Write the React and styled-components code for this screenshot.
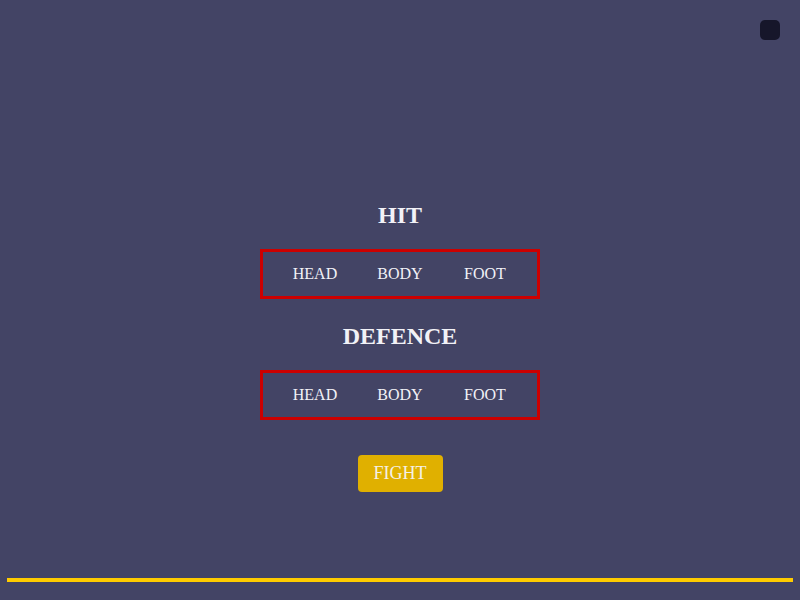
import React from "react";
import styled, { createGlobalStyle } from "styled-components";

const Global = createGlobalStyle`
  html, body { margin: 0; padding: 0; }
  body {
    background: #434465;
    font-family: "Liberation Serif", "Times New Roman", serif;
    color: #f2f2f7;
  }
`;

const Page = styled.div`
  position: relative;
  height: 600px;
  display: flex;
  flex-direction: column;
  align-items: center;
  padding-top: 201px;
  box-sizing: border-box;
`;

const Corner = styled.div`
  position: absolute;
  top: 20px;
  right: 20px;
  width: 20px;
  height: 20px;
  border-radius: 5px;
  background: #16162a;
`;

const Title = styled.h2`
  margin: 0;
  font-size: 24px;
  line-height: 28px;
  font-weight: bold;
  text-align: center;
  margin-top: ${(p) => p.$top || 0}px;
`;

const Options = styled.div`
  margin-top: 20px;
  width: 280px;
  height: 50px;
  box-sizing: border-box;
  border: 3px solid #cc0000;
  display: flex;
  justify-content: center;
  align-items: center;
`;

const Option = styled.div`
  width: 85px;
  text-align: center;
  font-size: 16px;
  cursor: pointer;
`;

const FightButton = styled.button`
  margin-top: 35px;
  width: 85px;
  height: 37px;
  border: none;
  border-radius: 4px;
  background: #e0b000;
  color: #f5f0e6;
  font-family: "Liberation Serif", "Times New Roman", serif;
  font-size: 18px;
  cursor: pointer;
`;

const Spacer = styled.div`
  flex: 1;
`;

const BottomLine = styled.div`
  align-self: stretch;
  margin: 0 7px 18px;
  height: 4px;
  background: #ffcc00;
`;

const parts = ["HEAD", "BODY", "FOOT"];

export default function App() {
  return (
    <>
      <Global />
      <Page>
        <Corner />
        <Title>HIT</Title>
        <Options>
          {parts.map((p) => (
            <Option key={p}>{p}</Option>
          ))}
        </Options>
        <Title $top={23}>DEFENCE</Title>
        <Options>
          {parts.map((p) => (
            <Option key={p}>{p}</Option>
          ))}
        </Options>
        <FightButton>FIGHT</FightButton>
        <Spacer />
        <BottomLine />
      </Page>
    </>
  );
}
